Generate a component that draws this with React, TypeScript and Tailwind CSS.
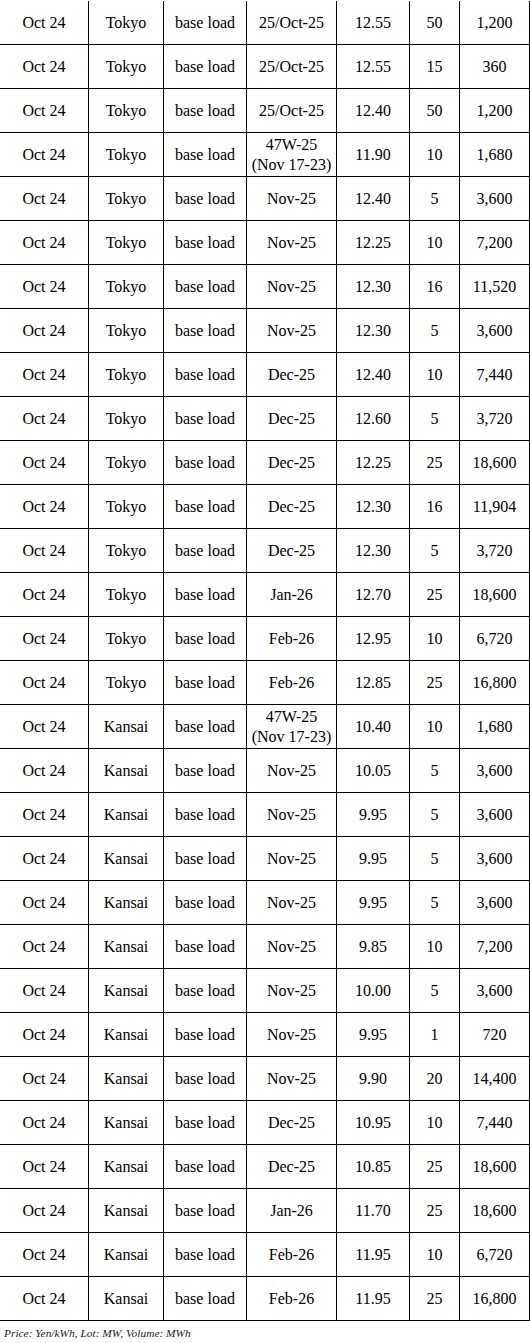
const rows: [string, string, string, string, string, string, string][] = [
  ["Oct 24", "Tokyo", "base load", "25/Oct-25", "12.55", "50", "1,200"],
  ["Oct 24", "Tokyo", "base load", "25/Oct-25", "12.55", "15", "360"],
  ["Oct 24", "Tokyo", "base load", "25/Oct-25", "12.40", "50", "1,200"],
  ["Oct 24", "Tokyo", "base load", "47W-25\n(Nov 17-23)", "11.90", "10", "1,680"],
  ["Oct 24", "Tokyo", "base load", "Nov-25", "12.40", "5", "3,600"],
  ["Oct 24", "Tokyo", "base load", "Nov-25", "12.25", "10", "7,200"],
  ["Oct 24", "Tokyo", "base load", "Nov-25", "12.30", "16", "11,520"],
  ["Oct 24", "Tokyo", "base load", "Nov-25", "12.30", "5", "3,600"],
  ["Oct 24", "Tokyo", "base load", "Dec-25", "12.40", "10", "7,440"],
  ["Oct 24", "Tokyo", "base load", "Dec-25", "12.60", "5", "3,720"],
  ["Oct 24", "Tokyo", "base load", "Dec-25", "12.25", "25", "18,600"],
  ["Oct 24", "Tokyo", "base load", "Dec-25", "12.30", "16", "11,904"],
  ["Oct 24", "Tokyo", "base load", "Dec-25", "12.30", "5", "3,720"],
  ["Oct 24", "Tokyo", "base load", "Jan-26", "12.70", "25", "18,600"],
  ["Oct 24", "Tokyo", "base load", "Feb-26", "12.95", "10", "6,720"],
  ["Oct 24", "Tokyo", "base load", "Feb-26", "12.85", "25", "16,800"],
  ["Oct 24", "Kansai", "base load", "47W-25\n(Nov 17-23)", "10.40", "10", "1,680"],
  ["Oct 24", "Kansai", "base load", "Nov-25", "10.05", "5", "3,600"],
  ["Oct 24", "Kansai", "base load", "Nov-25", "9.95", "5", "3,600"],
  ["Oct 24", "Kansai", "base load", "Nov-25", "9.95", "5", "3,600"],
  ["Oct 24", "Kansai", "base load", "Nov-25", "9.95", "5", "3,600"],
  ["Oct 24", "Kansai", "base load", "Nov-25", "9.85", "10", "7,200"],
  ["Oct 24", "Kansai", "base load", "Nov-25", "10.00", "5", "3,600"],
  ["Oct 24", "Kansai", "base load", "Nov-25", "9.95", "1", "720"],
  ["Oct 24", "Kansai", "base load", "Nov-25", "9.90", "20", "14,400"],
  ["Oct 24", "Kansai", "base load", "Dec-25", "10.95", "10", "7,440"],
  ["Oct 24", "Kansai", "base load", "Dec-25", "10.85", "25", "18,600"],
  ["Oct 24", "Kansai", "base load", "Jan-26", "11.70", "25", "18,600"],
  ["Oct 24", "Kansai", "base load", "Feb-26", "11.95", "10", "6,720"],
  ["Oct 24", "Kansai", "base load", "Feb-26", "11.95", "25", "16,800"],
];

// column widths include each cell's 1px right border
const widths = ["w-[89px]", "w-[75px]", "w-[83px]", "w-[90px]", "w-[73px]", "w-[50px]", "w-[70px]"];

export default function App() {
  return (
    <div className="w-[530px] bg-white pt-px text-black font-['Liberation_Serif',serif]">
      <div className="flex flex-col">
        {rows.map((r, i) => (
          <div key={i} className="flex h-[44px]">
            {r.map((c, j) => (
              <div
                key={j}
                className={`${widths[j]} flex shrink-0 items-center justify-center border-r border-b border-black text-center text-[16px] leading-[20px] whitespace-pre-line`}
              >
                {c}
              </div>
            ))}
          </div>
        ))}
      </div>
      <p className="mt-[5px] pl-[4px] text-[11.4px] italic leading-[14px] text-[#222]">
        Price: Yen/kWh, Lot: MW, Volume: MWh
      </p>
    </div>
  );
}
